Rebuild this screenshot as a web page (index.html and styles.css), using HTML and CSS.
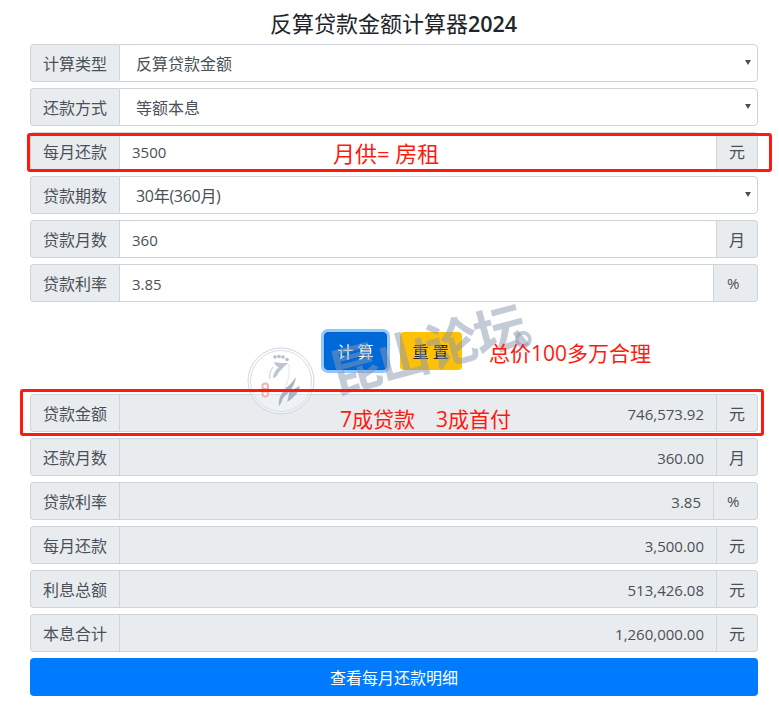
FILE: index.html
```html
<!DOCTYPE html>
<html lang="zh-CN">
<head>
<meta charset="utf-8">
<title>反算贷款金额计算器2024</title>
<link rel="stylesheet" href="styles.css">
</head>
<body>
<main class="page">
  <h1 class="title">反算贷款金额计算器<span class="year">2024</span></h1>
  <form class="form">
    <div class="row"><span class="addon label">计算类型</span><span class="select-wrap"><select class="field"><option>反算贷款金额</option></select></span></div>
    <div class="row"><span class="addon label">还款方式</span><span class="select-wrap"><select class="field"><option>等额本息</option></select></span></div>
    <div class="row"><span class="addon label">每月还款</span><input class="field" value="3500"><span class="addon unit">元</span></div>
    <div class="row"><span class="addon label">贷款期数</span><span class="select-wrap"><select class="field field-tight"><option>30年(360月)</option></select></span></div>
    <div class="row"><span class="addon label">贷款月数</span><input class="field" value="360"><span class="addon unit">月</span></div>
    <div class="row"><span class="addon label">贷款利率</span><input class="field" value="3.85"><span class="addon unit unit-pct">%</span></div>
    <div class="actions">
      <button type="button" class="btn btn-calc">计 算</button>
      <button type="button" class="btn btn-reset">重 置</button>
    </div>
    <div class="row"><span class="addon label">贷款金额</span><input class="field result" readonly value="746,573.92"><span class="addon unit">元</span></div>
    <div class="row"><span class="addon label">还款月数</span><input class="field result" readonly value="360.00"><span class="addon unit">月</span></div>
    <div class="row"><span class="addon label">贷款利率</span><input class="field result" readonly value="3.85"><span class="addon unit unit-pct">%</span></div>
    <div class="row"><span class="addon label">每月还款</span><input class="field result" readonly value="3,500.00"><span class="addon unit">元</span></div>
    <div class="row"><span class="addon label">利息总额</span><input class="field result" readonly value="513,426.08"><span class="addon unit">元</span></div>
    <div class="row"><span class="addon label">本息合计</span><input class="field result" readonly value="1,260,000.00"><span class="addon unit">元</span></div>
    <button type="button" class="btn btn-detail">查看每月还款明细</button>
  </form>

  <svg class="seal" viewBox="0 0 68 68" aria-hidden="true">
    <circle cx="34" cy="34" r="33" fill="#fff" fill-opacity=".3" stroke="#cfd6df" stroke-width="1"/>
    <circle cx="34" cy="34" r="30.5" fill="none" stroke="#d8dde5" stroke-width="1"/>
    <g fill="#b4bfcc">
      <circle cx="28" cy="10" r="1.8"/>
      <circle cx="32" cy="9.5" r="1.8"/>
      <circle cx="36" cy="10" r="1.8"/>
      <circle cx="40" cy="12.5" r="1.8"/>
    </g>
    <path d="M27 15c4 1 9 1 14 1-3 3-8 7-10 11-1 2-3 4-5 4 0-4 2-8 6-11-2 0-4-2-5-5z" fill="#bcc6d2"/>
    <path d="M26 20c-3 4-4 8-3 12" fill="none" stroke="#cdd4dd" stroke-width="1.2"/>
    <path d="M42 17c1 9-1 20-6 28" fill="none" stroke="#f3dfe3" stroke-width="1"/>
    <path d="M49 30c-1 6-3 10-6 14l10-5c-1 6-6 12-13 16 1-3 2-7 2-10l-6 6c-1 3-2 6-4 8-1-6 2-13 7-18 4-3 7-7 10-11z" fill="#a9b5c3"/>
    <rect x="15.500" y="36.500" width="5.500" height="13" rx="2.700" fill="#fff" stroke="#ecb4b4" stroke-width="2"/>
    <path d="M16 41.500h4M16 45h4" stroke="#ecb4b4" stroke-width="1"/>
  </svg>
  <div class="watermark">昆山论坛<span class="watermark-dot">。</span></div>

  <div class="callout callout-rent"></div>
  <div class="callout callout-loan"></div>
  <div class="note note-rent">月供= 房租</div>
  <div class="note note-price">总价100多万合理</div>
  <div class="note note-loan">7成贷款　3成首付</div>
</main>
</body>
</html>
```
FILE: styles.css
```css
* { box-sizing: border-box; }

html, body { margin: 0; background: #fff; }

body {
  font-family: "Open Sans", "Noto Sans CJK SC", sans-serif;
  font-size: 16px;
  color: #212529;
}

.page {
  position: relative;
  width: 779px;
  height: 715px;
  padding: 0 21px 0 30px;
  overflow: hidden;
}

.title {
  margin: 0;
  height: 44px;
  padding-right: 1px;
  font-size: 22px;
  font-weight: 400;
  line-height: 46px;
  text-align: center;
}

.year { font-size: 21.5px; font-weight: 600; }

.form { display: flex; flex-direction: column; gap: 6px; }

.row { display: flex; height: 38px; }

.addon {
  display: flex;
  align-items: center;
  padding: 0 12px;
  background: #e9ecef;
  border: 1px solid #ced4da;
  color: #495057;
  font-size: 16px;
  white-space: nowrap;
}

.label { border-radius: 4px 0 0 4px; border-right: 0; }
.unit { border-radius: 0 4px 4px 0; border-left: 0; }
.unit-pct { width: 44px; padding: 0 0 0 13px; font-size: 15px; }

.field {
  flex: 1;
  min-width: 0;
  width: 100%;
  height: 38px;
  padding: 1px 12px 0;
  background-color: #fff;
  border: 1px solid #ced4da;
  color: #495057;
  font-family: inherit;
  font-size: 15px;
}

input.field { border-radius: 0; }

.select-wrap { position: relative; display: flex; flex: 1; min-width: 0; }

.select-wrap::after {
  content: "";
  position: absolute;
  top: 16px;
  right: 7px;
  border-top: 5px solid #495057;
  border-left: 3px solid transparent;
  border-right: 3px solid transparent;
  pointer-events: none;
}

select.field {
  appearance: none;
  padding: 2px 24px 0 16px;
  border-radius: 0 4px 4px 0;
  font-size: 16px;
}

select.field-tight { letter-spacing: -.3px; }

.result { background: #e9ecef; text-align: right; }

.actions {
  display: flex;
  justify-content: center;
  gap: 13px;
  padding: 24px 2px 18px 0;
}

.btn {
  height: 38px;
  padding: 0 12px;
  border: 1px solid transparent;
  border-radius: 4px;
  font-family: inherit;
  font-size: 16px;
}

.btn-calc {
  background: #0069d9;
  border-color: #0062cc;
  box-shadow: 0 0 0 3px rgba(38, 143, 255, .5);
  color: #fff;
}

.btn-reset { background: #ffc107; color: #212529; }

.btn-detail { width: 100%; background: #007bff; color: #fff; }

.seal {
  position: absolute;
  left: 247px;
  top: 347px;
  width: 68px;
  height: 68px;
}

.watermark {
  position: absolute;
  left: 330px;
  top: 345px;
  font-size: 52px;
  font-weight: 700;
  line-height: 60px;
  letter-spacing: -2px;
  color: rgba(135, 152, 175, .5);
  white-space: nowrap;
  transform: rotate(-15deg);
  transform-origin: left center;
}

.watermark-dot { margin-left: -14px; }

.callout {
  position: absolute;
  border: 3px solid #ff1a0f;
  border-radius: 3px;
}

.callout-rent { left: 27px; top: 133px; width: 745px; height: 39px; }
.callout-loan { left: 20px; top: 389px; width: 744px; height: 47px; }

.note {
  position: absolute;
  color: #ff1a0f;
  white-space: nowrap;
  line-height: 30px;
}

.note-rent { left: 333px; top: 138px; font-size: 22px; }
.note-price { left: 489px; top: 338px; font-size: 21px; }
.note-loan { left: 340px; top: 404px; font-size: 21px; }
```
